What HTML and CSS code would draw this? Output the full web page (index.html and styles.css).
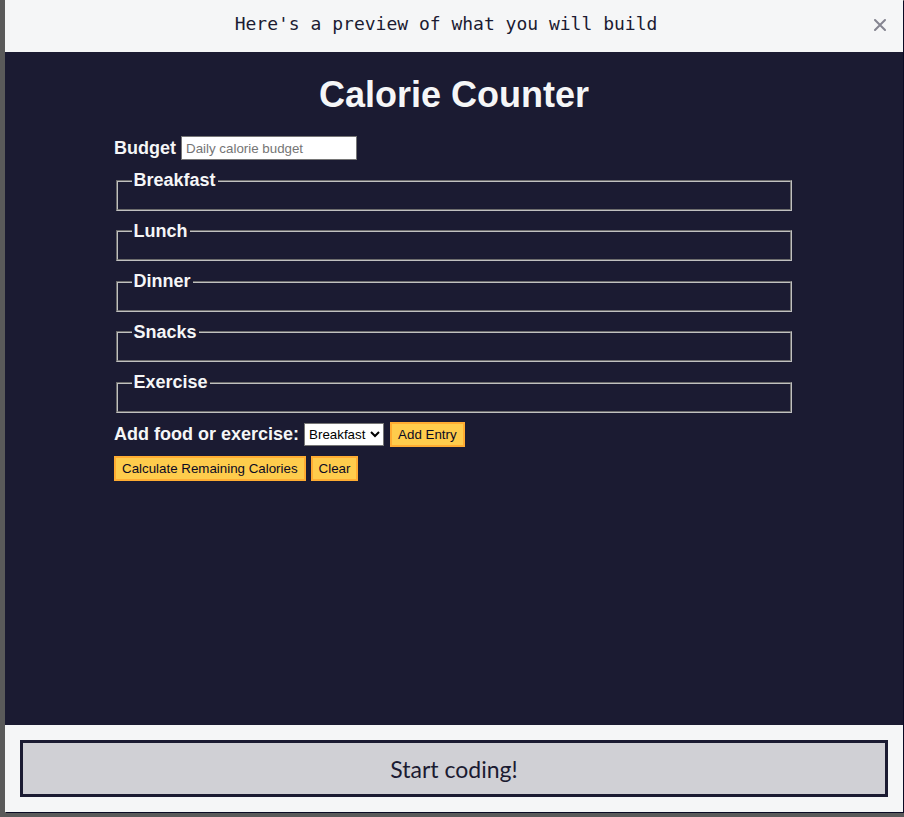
FILE: index.html
```html
<!DOCTYPE html>
<html lang="en">
<head>
<meta charset="utf-8">
<title>Calorie Counter preview</title>
<link rel="stylesheet" href="styles.css">
</head>
<body>
<div class="modal">
  <div class="modal-header">
    <h2 class="modal-title">Here's a preview of what you will build</h2>
    <button class="close" type="button" aria-label="Close">
      <svg width="12" height="12" viewBox="0 0 12 12"><path d="M1 1 L11 11 M11 1 L1 11" stroke="#858591" stroke-width="2" stroke-linecap="round" fill="none"/></svg>
    </button>
  </div>
  <div class="preview">
    <h1 class="title">Calorie Counter</h1>
    <div class="container">
      <form class="form">
        <div class="budget-row">
          <label class="lbl" for="budget">Budget</label>
          <input class="budget" id="budget" type="number" placeholder="Daily calorie budget">
        </div>
        <fieldset class="meal"><legend class="legend">Breakfast</legend><div class="input-container"></div></fieldset>
        <fieldset class="meal"><legend class="legend">Lunch</legend><div class="input-container"></div></fieldset>
        <fieldset class="meal"><legend class="legend">Dinner</legend><div class="input-container"></div></fieldset>
        <fieldset class="meal"><legend class="legend">Snacks</legend><div class="input-container"></div></fieldset>
        <fieldset class="meal"><legend class="legend">Exercise</legend><div class="input-container"></div></fieldset>
        <div class="controls">
          <label class="lbl" for="entry">Add food or exercise:</label>
          <select class="dropdown" id="entry">
            <option>Breakfast</option>
            <option>Lunch</option>
            <option>Dinner</option>
            <option>Snacks</option>
            <option>Exercise</option>
          </select>
          <button class="btn add" type="button">Add Entry</button>
        </div>
        <div class="actions">
          <button class="btn" type="button">Calculate Remaining Calories</button>
          <button class="btn" type="button">Clear</button>
        </div>
      </form>
    </div>
  </div>
  <div class="modal-footer">
    <button class="start" type="button">Start coding!</button>
  </div>
</div>
</body>
</html>
```

FILE: styles.css
```css
html, body {
  margin: 0;
  padding: 0;
}
body {
  width: 904px;
  height: 817px;
  background: #5a5a5a;
  overflow: hidden;
}
.modal {
  margin-left: 5px;
  width: 898px;
  display: flex;
  flex-direction: column;
  box-shadow: 1px 1px 0 #0a0a23;
}
.modal-header {
  position: relative;
  height: 52px;
  background: #f5f6f7;
  display: flex;
  align-items: center;
}
.modal-title {
  flex: 1;
  margin: 0;
  padding-right: 16px;
  text-align: center;
  font-family: "DejaVu Sans Mono", "Liberation Mono", monospace;
  font-weight: normal;
  font-size: 18px;
  color: #1b1b32;
  line-height: 1;
  margin-top: -5px;
}
.close {
  position: absolute;
  right: 17px;
  top: 19px;
  width: 12px;
  height: 12px;
  padding: 0;
  border: 0;
  background: none;
  display: block;
}
.close svg {
  display: block;
}
.preview {
  height: 673px;
  box-sizing: border-box;
  padding-top: 2px;
  background: #1b1b32;
  color: #f5f6f7;
  font-family: "Liberation Sans", Arial, sans-serif;
  font-size: 18px;
  display: flow-root;
}
.title {
  margin: 20px auto;
  text-align: center;
  font-size: 36px;
  font-weight: bold;
}
.container {
  width: 680px;
  margin: 20px auto;
}
.form {
  margin: 0;
}
.lbl {
  font-weight: bold;
}
.budget {
  width: 176px;
  height: 24px;
  box-sizing: border-box;
  border: 1px solid #767676;
  padding: 0 4px;
  font-family: "Liberation Sans", Arial, sans-serif;
  font-size: 13.33px;
  background: #fff;
  vertical-align: 1px;
  -moz-appearance: textfield;
}
.budget::placeholder {
  color: #757575;
}
.meal {
  margin: 10px 2px;
  border: 2px groove #c0c0c0;
  padding: 6.3px 13.5px 11.25px;
}
.legend {
  font-weight: bold;
  padding: 0 2px;
}
.input-container {
  display: flex;
  flex-direction: column;
}
.controls {
  margin-top: -1px;
}
.dropdown {
  font-family: "Liberation Sans", Arial, sans-serif;
  font-size: 13.33px;
  height: 23px;
  width: 80px;
  border: 1px solid #767676;
  border-radius: 0;
  background: #fff;
  color: #000;
  vertical-align: 1px;
}
.btn {
  font-family: "Liberation Sans", Arial, sans-serif;
  font-size: 13.33px;
  color: #0a0a23;
  background: #fecc4c;
  border: 2px solid #feac32;
  padding: 3px 6px;
  margin: 0;
  vertical-align: 1px;
}
.add {
  margin-left: 1px;
}
.actions {
  margin-top: 9px;
}
.modal-footer {
  height: 87px;
  box-sizing: border-box;
  padding: 15px;
  background: #f5f6f7;
}
.start {
  display: block;
  width: 100%;
  height: 57px;
  box-sizing: border-box;
  border: 3px solid #1b1b32;
  background: #d0d0d5;
  color: #1b1b32;
  font-family: Lato, "Noto Sans", sans-serif;
  font-size: 23px;
  padding: 0;
}
```
